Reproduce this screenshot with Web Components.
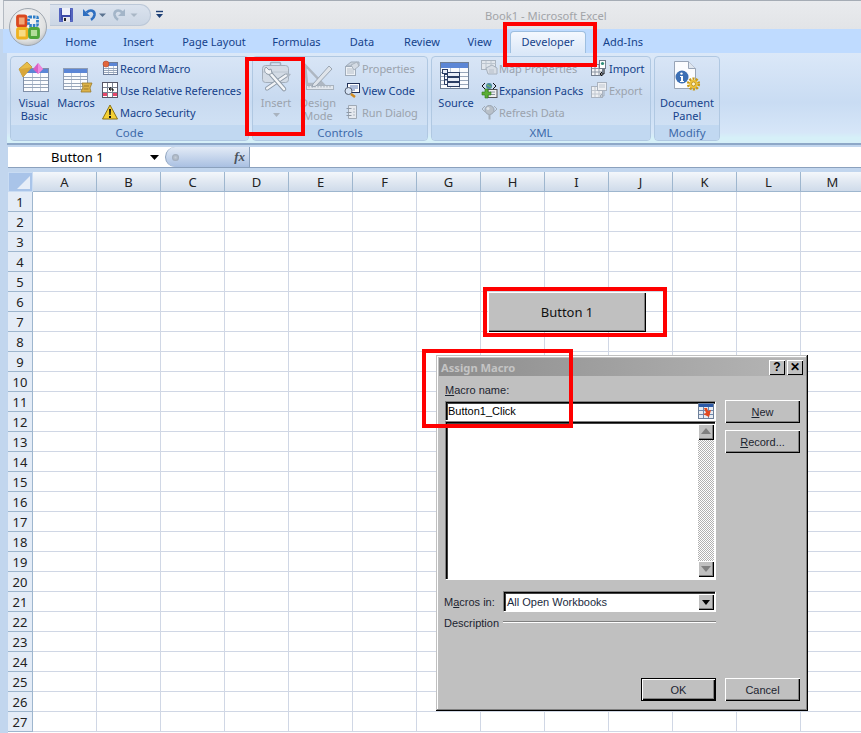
<!DOCTYPE html>
<html><head><meta charset="utf-8"><title>Excel</title>
<style>html,body{margin:0;padding:0;background:#c2d6ee}</style></head>
<body>
<x-app>
  <x-titlebar>
    <x-qat>
      <x-ico n="save" w="16" h="16"></x-ico>
      <x-ico n="undo" w="31" h="16" style="margin-left:7px"></x-ico>
      <x-ico n="redo" w="30" h="16"></x-ico>
    </x-qat>
    <x-ico n="cust" w="8" h="16" style="margin-left:5px"></x-ico>
    <x-title>Book1 - Microsoft Excel</x-title>
  </x-titlebar>
  <x-tabs>
    <x-tab w="58">Home</x-tab><x-tab w="57">Insert</x-tab><x-tab w="94">Page Layout</x-tab><x-tab w="71">Formulas</x-tab><x-tab w="60">Data</x-tab><x-tab w="60">Review</x-tab><x-tab w="55">View</x-tab>
    <x-tab w="76" active style="margin-left:3px">Developer</x-tab><x-tab w="74">Add-Ins</x-tab>
  </x-tabs>
  <x-ribbon>
    <x-group w="239" label="Code">
      <x-big w="42" style="margin-left:3px"><x-ico slot="icon" n="vb"></x-ico>Visual<br>Basic</x-big>
      <x-big w="42"><x-ico slot="icon" n="macros"></x-ico>Macros</x-big>
      <x-col style="margin-left:5px">
        <x-small><x-ico slot="icon" n="rec" w="16" h="16"></x-ico>Record Macro</x-small>
        <x-small><x-ico slot="icon" n="rel" w="16" h="16"></x-ico>Use Relative References</x-small>
        <x-small><x-ico slot="icon" n="sec" w="16" h="16"></x-ico>Macro Security</x-small>
      </x-col>
    </x-group>
    <x-group w="176" label="Controls">
      <x-big w="44" disabled style="margin-left:2px"><x-ico slot="icon" n="insert"></x-ico>Insert<br><x-ico n="tri" w="7" h="4" style="vertical-align:3px"></x-ico></x-big>
      <x-big w="40" disabled><x-ico slot="icon" n="design"></x-ico>Design<br>Mode</x-big>
      <x-col style="margin-left:6px">
        <x-small disabled><x-ico slot="icon" n="prop" w="16" h="16"></x-ico>Properties</x-small>
        <x-small><x-ico slot="icon" n="code" w="16" h="16"></x-ico>View Code</x-small>
        <x-small disabled><x-ico slot="icon" n="run" w="16" h="16"></x-ico>Run Dialog</x-small>
      </x-col>
    </x-group>
    <x-group w="220" label="XML">
      <x-big w="40" style="margin-left:5px"><x-ico slot="icon" n="source"></x-ico>Source</x-big>
      <x-col style="margin-left:5px;width:110px">
        <x-small disabled><x-ico slot="icon" n="map" w="16" h="16"></x-ico>Map Properties</x-small>
        <x-small><x-ico slot="icon" n="pack" w="16" h="16"></x-ico>Expansion Packs</x-small>
        <x-small disabled><x-ico slot="icon" n="refresh" w="16" h="16"></x-ico>Refresh Data</x-small>
      </x-col>
      <x-col>
        <x-small><x-ico slot="icon" n="import" w="16" h="16"></x-ico>Import</x-small>
        <x-small disabled><x-ico slot="icon" n="export" w="16" h="16"></x-ico>Export</x-small>
      </x-col>
    </x-group>
    <x-group w="66" label="Modify">
      <x-big w="66"><x-ico slot="icon" n="doc"></x-ico>Document<br>Panel</x-big>
    </x-group>
  </x-ribbon>
  <x-formula>Button 1</x-formula>
  <x-sheet></x-sheet>

  <x-orb></x-orb>
  <x-formbtn>Button 1</x-formbtn>
  <x-dialog heading="Assign Macro">
    <x-label><u>M</u>acro name:</x-label>
    <x-field>Button1_Click</x-field>
    <x-list></x-list>
    <x-select label="Macros in:">All Open Workbooks</x-select>
    <x-sep>Description</x-sep>
    <x-btn slot="ok" default>OK</x-btn>
    <x-btn slot="side"><u>N</u>ew</x-btn>
    <x-btn slot="side" style="margin-top:7px"><u>R</u>ecord...</x-btn>
    <x-btn slot="cancel">Cancel</x-btn>
  </x-dialog>
  <x-mark style="left:503px;top:22px;width:94px;height:45px"></x-mark>
  <x-mark style="left:245px;top:57px;width:60px;height:79px"></x-mark>
  <x-mark style="left:483px;top:287px;width:184px;height:50px"></x-mark>
  <x-mark style="left:422px;top:349px;width:151px;height:79px"></x-mark>
</x-app>
<script>
const FONT='"Noto Sans","Open Sans",sans-serif';
const DLG='"Liberation Sans",Arial,sans-serif';
function def(name,css,html){customElements.define(name,class extends HTMLElement{constructor(){super();this.attachShadow({mode:'open'}).innerHTML='<style>'+css+'</style>'+(typeof html==='function'?'':html);}
connectedCallback(){if(typeof html==='function'){this.shadowRoot.innerHTML='<style>'+css+'</style>'+html(this);}}});}

const tbl=(x,y,w,h,hdr,cols,rows,line)=>{let s=`<rect x="${x+.5}" y="${y+.5}" width="${w-1}" height="${h-1}" fill="#fbfcfe" stroke="${line}"/><rect x="${x+1}" y="${y+1}" width="${w-2}" height="${hdr}" fill="#5b86d6"/>`;
 for(let i=1;i<cols;i++){const X=x+Math.round(w*i/cols)+.5;s+=`<path d="M${X} ${y+hdr+1}V${y+h-1}" stroke="#b9c5d6"/>`;}
 const rh=(h-hdr-2)/rows;for(let i=1;i<rows;i++){const Y=Math.round(y+hdr+1+rh*i)+.5;s+=`<path d="M${x+1} ${Y}H${x+w-1}" stroke="#98a6ba"/>`;}return s;};

const ICONS={
save:`<rect x="0" y="1" width="14" height="14" rx="1" fill="#3b4aa8"/><rect x="1" y="2" width="12" height="12" fill="none" stroke="#6c7fd6"/><rect x="3" y="1" width="8" height="7" fill="#eef1fa"/><rect x="4" y="10" width="7" height="5" fill="#e4e6ee"/><rect x="5" y="11" width="2" height="3" fill="#222"/>`,
undo:`<path d="M4.500 5.500c4-3.500 8.500-2 8 2.500-.3 2.200-1.600 3.600-3.500 4.800" fill="none" stroke="#2f6fc0" stroke-width="2.600"/><path d="M1 2v7h7z" fill="#2f6fc0"/><path d="M17 6.500h7l-3.500 3.500z" fill="#5a7390"/>`,
redo:`<path d="M9.500 5.500c-4-3.500-8.500-2-8 2.500.3 2.200 1.600 3.600 3.500 4.800" fill="none" stroke="#a3b5c8" stroke-width="2.600"/><path d="M12 2v7h-7z" fill="#a3b5c8"/><path d="M17.500 6.500h7l-3.500 3.500z" fill="#a9b7c6"/>`,
cust:`<path d="M0 3.500h7" stroke="#1d3f75" stroke-width="1.400"/><path d="M0 6h7l-3.500 4z" fill="#1d3f75"/>`,
tri:`<path d="M0 0h7l-3.500 4z" fill="#a9b3bf"/>`,
vb:tbl(5,8,26,24,4,3,5,'#7f8fa8')+`<path d="M1 9l8-7 5 5-9 10z" fill="#e8bd48" stroke="#b08a28" stroke-width=".7"/><path d="M1 9l4 8 9-10-5 1z" fill="#d8a63a"/><path d="M15 9l5-6 5 6-5 5z" fill="#d95fc5"/><path d="M20 3l5 6-5 5z" fill="#ee8adf"/>`,
macros:tbl(3,8,25,22,4,3,5,'#8f9db4')+`<path d="M22 23h10l-2 5 1 4H21l2-5z" fill="#dcb24a" stroke="#9c7b2a" stroke-width=".8"/><path d="M24 26h5M23.500 29h5" stroke="#a07c26"/>`,
rec:tbl(1,2,15,13,3,3,4,'#6c7c98')+`<circle cx="4" cy="4" r="3" fill="#e2653b" stroke="#b4462a" stroke-width=".6"/>`,
rel:`<rect x=".5" y=".5" width="15" height="15" fill="#fff" stroke="#556"/><path d="M5.500 1v14M10.500 1v14M1 5.500h14M1 10.500h14" stroke="#7b8494"/><path d="M6 6h4v4H6z" fill="#fff"/><path d="M1 11h4v3H1zM11 11h4v3h-4z" fill="#e6476a"/><path d="M7 7h4v2M7 7l2-1.500M7 7l2 1.500" fill="none" stroke="#000"/>`,
sec:`<path d="M8 1l7.500 14H.5z" fill="#f4d034" stroke="#8a7218"/><path d="M7 5h2l-.4 6H7.400zM7 12h2v2H7z" fill="#111"/>`,
insert:`<rect x="2.500" y="5.500" width="26" height="17" rx="3" fill="#d3dbe5" stroke="#a3aebb"/><path d="M10.500 5.500v-2a1 1 0 0 1 1-1h8a1 1 0 0 1 1 1v2" fill="none" stroke="#a3aebb" stroke-width="1.500"/><path d="M3 12h25" stroke="#bcc6d1"/><path d="M7 28.500L26 15.500" stroke="#8f9ba8" stroke-width="4" stroke-linecap="round"/><path d="M7 28.500L26 15.500" stroke="#f1f3f6" stroke-width="2.200" stroke-linecap="round"/><path d="M26 13l5 1-3 4z" fill="#aeb8c4"/><path d="M9 12L24 29" stroke="#8f9ba8" stroke-width="4.500" stroke-linecap="round"/><path d="M9 12L24 29" stroke="#f4f6f8" stroke-width="2.600" stroke-linecap="round"/><path d="M6 7c-2 2-2 5 1 7 2 1 4 0 5-1l-1-4-2 1-2-2z" fill="#f1f3f6" stroke="#8f9ba8"/>`,
design:`<rect x="4.500" y="25.500" width="27" height="4" fill="#e3e8ee" stroke="#a9b3be"/><path d="M7 26v1.500M10 26v1.500M13 26v1.500M16 26v1.500M19 26v1.500M22 26v1.500M25 26v1.500M28 26v1.500" stroke="#a3adb8"/><path d="M3 5l2 19h16z" fill="none" stroke="#aeb7c2" stroke-width="2.500"/><path d="M11 24L27 6l3 3-16 17-4 1z" fill="#dfe4ea" stroke="#9aa5b2"/>`,
prop:`<path d="M2 6l5-4h8v4z" fill="#c9d2dd" stroke="#a0acba"/><rect x="1.500" y="6.500" width="10" height="9" fill="#eef1f5" stroke="#a0acba"/><path d="M3 9h7M3 11h7M3 13h7" stroke="#b4bec9"/><path d="M7 5l6-3 2 4-5 4z" fill="#d4dbe4" stroke="#a9b3be"/>`,
code:`<rect x="3.500" y="1.500" width="12" height="9" fill="#fff" stroke="#1f2f56"/><path d="M6 4h8M6 6h8M6 8h5" stroke="#5a78b5"/><circle cx="4.500" cy="9" r="3.500" fill="#d5e2f3" stroke="#555f70"/><path d="M7 12l4 3" stroke="#d18a1d" stroke-width="2.400"/>`,
run:`<path d="M4.500 1.500h8v13h-8z" fill="#e5e9ef" stroke="#9fa9b5"/><path d="M2.500 4.500h5M2.500 8.500h5M2.500 11.500h5" stroke="#8e99a6"/><path d="M9 5h2M9 8h2M9 11h2" stroke="#b0b9c3"/>`,
source:tbl(0,2,29,27,5,3,5,'#6f7f96')+`<g fill="#e8edf6" stroke="#2b3d63"><rect x="2.500" y="9.500" width="5" height="4"/><rect x="7.500" y="12.500" width="12" height="4"/><rect x="7.500" y="17.500" width="12" height="4"/><rect x="7.500" y="22.500" width="12" height="4"/></g><path d="M4.500 13.500V24.500H7.500M4.500 14.500H7.500M4.500 19.500H7.500" fill="none" stroke="#2b3d63"/>`,
map:`<rect x=".5" y=".5" width="14" height="9" fill="#e1e6ec" stroke="#aab4c0"/><path d="M.5 3.500h14M5 1v8M10 1v8" stroke="#bcc5cf"/><path d="M5 8l6-3 5 3v6H7z" fill="#d7dde5" stroke="#a8b2be"/><path d="M8 10h5M8 12h5" stroke="#b6bfca"/>`,
pack:`<path d="M4 1L1 4l3 3M12 1l3 3-3 3" stroke="#111" fill="none"/><circle cx="8" cy="4" r="3" fill="#4b8a9a"/><path d="M6 3l4 2" stroke="#7ec04a"/><rect x="7" y="7.500" width="9" height="8" fill="#eee" stroke="#555"/><path d="M9 10h5M9 12.500h5" stroke="#8a93a0"/><path d="M4 7h3v3h3v3H7v3H4v-3H1v-3h3z" fill="#5aad35" stroke="#2e7a1a" stroke-width=".6"/>`,
refresh:`<circle cx="8.500" cy="6" r="4.500" fill="#b8c0c9" stroke="#9aa4b0"/><circle cx="7" cy="4.500" r="1.500" fill="#dfe4e9"/><path d="M4 2L1 5l3 3M13 2l3 3-3 3" fill="none" stroke="#a3adb8"/><path d="M8.500 10.500v5" stroke="#a3adb8" stroke-width="2"/>`,
import:`<rect x=".5" y="4.500" width="11" height="11" fill="#f4f5f7" stroke="#737e8e"/><path d="M4 5v10M8 5v10M1 8.500h10M1 12h10" stroke="#8b95a3"/><rect x="8.500" y=".5" width="6" height="8" fill="#fff" stroke="#6f7a8a"/><circle cx="11.500" cy="3.500" r="1.600" fill="#2f8f7a"/><path d="M13 9v5h-3M11 12l-2 2 2 2" fill="none" stroke="#111"/>`,
export:`<rect x=".5" y="4.500" width="11" height="11" fill="#eef0f3" stroke="#aab3bf"/><path d="M4 5v10M8 5v10M1 8.500h10M1 12h10" stroke="#c0c7d0"/><rect x="6.500" y=".5" width="9" height="8" fill="#eef0f3" stroke="#aab3bf"/><path d="M8 3h6M8 5h6" stroke="#bec6d0"/><path d="M13 9v5h-3M11 12l-2 2 2 2" fill="none" stroke="#a3adb8"/>`,
doc:`<path d="M3.500 1.500h14l7 7v20h-21z" fill="#fbfcfe" stroke="#98a4b6"/><path d="M17.500 1.500v7h7" fill="#dfe6ef" stroke="#98a4b6"/><circle cx="11" cy="17" r="6.500" fill="#3c6fb4"/><circle cx="10.500" cy="13.600" r="1.200" fill="#fff"/><path d="M9 16h3v5h1v1H9v-1h1v-4H9z" fill="#fff"/><g transform="translate(22.500 24)"><circle r="5" fill="none" stroke="#c89a16" stroke-width="3.200" stroke-dasharray="2 1.140"/><circle r="4.300" fill="#eec23a"/><circle r="2" fill="#fff6d0" stroke="#a87e10" stroke-width=".7"/></g>`,
range:`<rect x=".5" y=".5" width="15" height="15" fill="#e7ecf3" stroke="#6d7f99"/><rect x="1" y="1" width="14" height="3" fill="#2c5aa8"/><path d="M1 7.500h14M1 11.500h14M5.500 4v11M10.500 4v11" stroke="#7089ad"/><path d="M6 5l3 0 1 3 3-1-2 7-6-3 3-1z" fill="#e2481f"/>`,
up:`<path d="M8 4l5 6H3z" fill="#808080"/>`,
down:`<path d="M3 5h10l-5 6z" fill="#808080"/>`,
downb:`<path d="M4 6h8l-4 5z" fill="#000"/>`,
caret:`<path d="M0 0h9l-4.500 5z" fill="#000"/>`,
orb:`<defs><radialGradient id="g" cx=".45" cy=".35" r=".75"><stop offset="0" stop-color="#fbfbfb"/><stop offset=".7" stop-color="#dfe0e0"/><stop offset="1" stop-color="#a9aeb2"/></radialGradient></defs><circle cx="19" cy="19" r="18.500" fill="url(#g)" stroke="#9fa7b0"/><g fill="none" stroke-width="2.800"><rect x="8.500" y="8" width="8.500" height="10" rx="1.500" stroke="#d9481f" fill="#f3a877"/><rect x="19.500" y="9" width="9" height="8.500" rx="1" stroke="#2f7ec8" stroke-dasharray="2.500 1"/><rect x="8.500" y="20.500" width="9.500" height="9.500" rx="1.500" stroke="#efb21f" fill="#f9dc84"/><rect x="20.500" y="20.500" width="9" height="9" rx="1.500" stroke="#4ea53a" fill="#b3dc9a"/></g>`
};
def('x-ico',':host{display:inline-block;line-height:0}svg{display:block;overflow:visible}',h=>{const w=h.getAttribute('w')||32,hh=h.getAttribute('h')||32;return `<svg xmlns="http://www.w3.org/2000/svg" width="${w}" height="${hh}" viewBox="0 0 ${w} ${hh}">${ICONS[h.getAttribute('n')]||''}</svg>`;});

def('x-app',`:host{display:flex;flex-direction:column;position:relative;width:861px;height:733px;overflow:hidden;background:#c2d6ee;font:11px ${FONT};color:#15428b}
 .edge{position:absolute;left:0;top:0;width:3px;height:29px;background:#eceef1}`,`<div class="edge"></div><slot></slot>`);
def('x-titlebar',`:host{display:flex;flex:none;align-items:center;height:29px;box-sizing:border-box;margin-left:3px;padding:1px 0 0 46px;background:linear-gradient(#e9ebee,#e2e4e7);border-top:1px solid #a5acb5;border-left:1px solid #b4bac2}`,`<slot></slot>`);
def('x-qat',`:host{display:flex;align-items:center;box-sizing:border-box;width:101px;height:22px;padding-left:9px;margin-top:-2px;background:linear-gradient(#dbe3ee,#cbd6e4);border:1px solid #bcc8d8;border-left:none;border-radius:0 11px 11px 0}`,`<slot></slot>`);
def('x-title',`:host{display:block;margin-left:321px;color:#a2a4a8;font-size:11.200px;white-space:nowrap}`,`<slot></slot>`);
def('x-tabs',`:host{display:flex;flex:none;height:24px;box-sizing:border-box;margin-left:3px;padding-left:49px;background:#bfdbff;align-items:flex-end}`,`<slot></slot>`);
def('x-tab',`:host{display:block;box-sizing:border-box;height:22px;line-height:21px;text-align:center;color:#15428b;font-size:11px;white-space:nowrap}
 :host([active]){background:linear-gradient(#f4f8fe,#dbe8f8);border:1px solid #9ebfe0;border-bottom:none;border-radius:4px 4px 0 0;line-height:20px}`,h=>`<style>:host{width:${h.getAttribute('w')}px}</style><slot></slot>`);
def('x-ribbon',`:host{display:flex;flex:none;gap:3px;height:92px;box-sizing:border-box;margin-left:7px;padding:3px 0 0 3px;background:linear-gradient(#dbe8f8 0,#c9dcf3 55%,#d6e6f8 88%,#d6f0f8 94%,#d6f0f8 96%);border-bottom:2px solid #8ea8c8}`,`<slot></slot>`);
def('x-group',`:host{display:flex;flex:none;flex-direction:column;box-sizing:border-box;height:85px;border:1px solid #b0c8e2;border-radius:4px;overflow:hidden;background:linear-gradient(#d8e5f6,#c8daf0 50%,#d4e4f6)}
 .b{display:flex;height:68px;flex:none;align-items:flex-start;margin-left:-1px}
 .f{flex:1;background:#c1d8f1;text-align:center;color:#3e6aaa;line-height:15px;font-size:11.500px}`,h=>`<style>:host{width:${h.getAttribute('w')}px}</style><div class="b"><slot></slot></div><div class="f">${h.getAttribute('label')}</div>`);
def('x-big',`:host{display:block;flex:none;text-align:center;line-height:13px;font-size:11px;color:#15428b;white-space:nowrap}
 :host([disabled]){color:#9ba3ad}
 .i{display:flex;justify-content:center;height:36px;padding-top:3px}`,h=>`<style>:host{width:${h.getAttribute('w')}px}</style><div class="i"><slot name="icon"></slot></div><slot></slot>`);
def('x-col',`:host{display:flex;flex-direction:column;flex:none}`,`<slot></slot>`);
def('x-small',`:host{display:flex;align-items:center;gap:2px;height:22px;font-size:11px;letter-spacing:-.08px;color:#15428b;white-space:nowrap}
 :host([disabled]){color:#9ba3ad}`,`<slot name="icon"></slot><slot></slot>`);
def('x-formula',`:host{display:flex;flex:none;height:21px;box-sizing:border-box;margin:2px 0 4px 8px;background:#fff;border-bottom:1px solid #8ba1bd;font-size:13px;color:#000}
 .n{width:157px;display:flex;align-items:center;box-sizing:border-box;padding:0 6px 0 43px;justify-content:space-between}
 .p{width:85px;height:20px;box-sizing:border-box;background:linear-gradient(#e3ebf6,#a9c0e2);border-radius:10px 0 0 10px;border-left:1px solid #8ba1bd;border-right:1px solid #8ba1bd;display:flex;align-items:center;justify-content:space-between;padding:0 4px 0 6px}
 .d{width:7px;height:7px;border-radius:50%;background:radial-gradient(#c4cdd8,#8f9bab)}
 .fx{font:italic bold 13px "Liberation Serif",serif;color:#4a525c}`,`<div class="n"><span><slot></slot></span><x-ico n="caret" w="9" h="5"></x-ico></div><div class="p"><span class="d"></span><span class="fx">fx</span></div>`);

customElements.define('x-sheet',class extends HTMLElement{constructor(){super();
 const r=this.attachShadow({mode:'open'});
 const cols='ABCDEFGHIJKLM'.split('');
 let h=`<style>:host{display:block;flex:1;min-height:0;margin-left:8px;overflow:hidden;background:#fff;font:13px ${FONT};color:#222}
 .g{display:grid;grid-template-columns:25px repeat(13,64px);grid-auto-rows:20px;width:857px}
 .g>div{box-sizing:border-box;display:flex;align-items:center;justify-content:center}
 .corner{background:#a9c4e9;border:1px solid #c9dcf3;position:relative}
 .corner::after{content:"";position:absolute;right:2px;bottom:2px;border-style:solid;border-width:0 0 13px 13px;border-color:transparent transparent #e7eef8 transparent}
 .ch{background:linear-gradient(#f4f7fb,#dfe7f1 55%,#cfdbea);border-right:1px solid #9eb6ce;border-bottom:1px solid #9eb6ce}
 .rh{background:#e4ecf7;border-right:1px solid #9eb6ce;border-bottom:1px solid #9eb6ce}
 .c{border-right:1px solid #d0d7e5;border-bottom:1px solid #d0d7e5}</style><div class="g"><div class="corner"></div>`;
 cols.forEach(c=>h+=`<div class="ch">${c}</div>`);
 for(let i=1;i<=27;i++){h+=`<div class="rh">${i}</div>`;cols.forEach(()=>h+='<div class="c"></div>');}
 r.innerHTML=h+'</div>';
}});

def('x-orb',`:host{position:absolute;left:9px;top:8px;width:38px;height:38px}`,`<x-ico n="orb" w="38" h="38"></x-ico>`);
def('x-formbtn',`:host{position:absolute;left:488px;top:292px;width:158px;height:40px;box-sizing:border-box;display:flex;align-items:center;justify-content:center;background:#c0c0c0;color:#111;font:13px ${FONT};box-shadow:inset 1px 1px 0 #fff,inset -1px -1px 0 #000,inset -2px -2px 0 #808080}`,`<slot></slot>`);
def('x-mark',`:host{position:absolute;box-sizing:border-box;border:4px solid #f00;pointer-events:none}`,``);

def('x-dialog',`:host{position:absolute;left:436px;top:355px;width:372px;height:356px;box-sizing:border-box;padding:3px 2px 3px 3px;background:#c0c0c0;font:11px ${DLG};color:#1c2430;box-shadow:inset -1px -1px 0 #000,inset 1px 1px 0 #c0c0c0,inset -2px -2px 0 #808080,inset 2px 2px 0 #fff}
 .t{display:flex;align-items:center;height:18px;padding:0 3px 0 2px;background:linear-gradient(90deg,#8d8d8d,#b6b6b6);color:#c4c4c4;font:700 11.200px ${FONT}}
 .t span{flex:1}
 .tb{width:16px;height:15px;margin-left:2px;box-sizing:border-box;background:#c0c0c0;color:#000;text-align:center;font:700 12px/14px "Liberation Sans",sans-serif;box-shadow:inset 1px 1px 0 #fff,inset -1px -1px 0 #000}
 .m{display:grid;grid-template-columns:271px 75px;column-gap:9px;padding:8px 0 0 6px}
 .l{display:flex;flex-direction:column;height:317px}
 .r{display:flex;flex-direction:column;padding-top:16px}
 .ok{margin-top:auto;align-self:flex-end}
 .cancel{margin-top:auto}
 .l,.r{box-sizing:border-box}
 `,h=>`<div class="t"><span>${h.getAttribute('heading')}</span><div class="tb">?</div><div class="tb">✕</div></div><div class="m"><div class="l"><slot></slot><div class="ok"><slot name="ok"></slot></div></div><div class="r"><slot name="side"></slot><div class="cancel"><slot name="cancel"></slot></div></div></div>`);
def('x-label',`:host{display:block;height:17px;line-height:13px;box-sizing:border-box;white-space:nowrap}`,`<slot></slot>`);
const SUNK='background:#fff;box-shadow:inset 1px 1px 0 #000,inset 2px 2px 0 #404040,inset -1px -1px 0 #fff;outline:0';
const EDGE='border-top:1px solid #808080;border-left:1px solid #808080;border-right:1px solid #fff;border-bottom:1px solid #fff';
def('x-field',`:host{display:flex;align-items:center;justify-content:space-between;box-sizing:border-box;height:20px;padding:0 1px 0 2px;${SUNK};color:#000;${EDGE}}`,`<span><slot></slot></span><x-ico n="range" w="16" h="16"></x-ico>`);
def('x-list',`:host{display:flex;justify-content:flex-end;box-sizing:border-box;height:159px;padding:2px 1px 2px 0;${SUNK};${EDGE}}
 .s{width:16px;display:flex;flex-direction:column;justify-content:space-between;background-color:#c0c0c0;background-image:repeating-conic-gradient(#fff 0 25%,#b0b0b0 0 50%);background-size:2px 2px}
 .b{height:16px;background:#c0c0c0;box-shadow:inset 1px 1px 0 #fff,inset -1px -1px 0 #000,inset -2px -2px 0 #808080}`,`<div class="s"><div class="b"><x-ico n="up" w="16" h="16"></x-ico></div><div class="b"><x-ico n="down" w="16" h="16"></x-ico></div></div>`);
def('x-select',`:host{display:flex;align-items:center;height:21px;margin-top:11px;white-space:nowrap}
 .lb{width:59px;flex:none;margin-left:-1px}
 .f{flex:1;height:21px;box-sizing:border-box;display:flex;align-items:center;justify-content:space-between;padding:0 1px 0 3px;${SUNK};color:#1a2a40;${EDGE}}
 .b{width:16px;height:16px;background:#c0c0c0;box-shadow:inset 1px 1px 0 #fff,inset -1px -1px 0 #000,inset -2px -2px 0 #808080}`,h=>`<div class="lb">M<u>a</u>cros in:</div><div class="f"><span><slot></slot></span><div class="b"><x-ico n="downb" w="16" h="16"></x-ico></div></div>`);
def('x-sep',`:host{display:flex;align-items:center;height:18px;margin:2px 0 0 -1px;white-space:nowrap}
 span{width:59px;flex:none}
 i{flex:1;height:1px;background:#808080;border-bottom:1px solid #fff;margin-top:-2px}`,`<span><slot></slot></span><i></i>`);
def('x-btn',`:host{display:flex;align-items:center;justify-content:center;box-sizing:border-box;width:75px;height:23px;background:#c0c0c0;color:#1c2430;font:11px ${DLG};box-shadow:inset 1px 1px 0 #fff,inset -1px -1px 0 #000,inset -2px -2px 0 #808080}
 :host([default]){box-shadow:inset 0 0 0 1px #000,inset 2px 2px 0 #fff,inset -2px -2px 0 #000,inset -3px -3px 0 #808080}`,`<slot></slot>`);
</script>
</body></html>
